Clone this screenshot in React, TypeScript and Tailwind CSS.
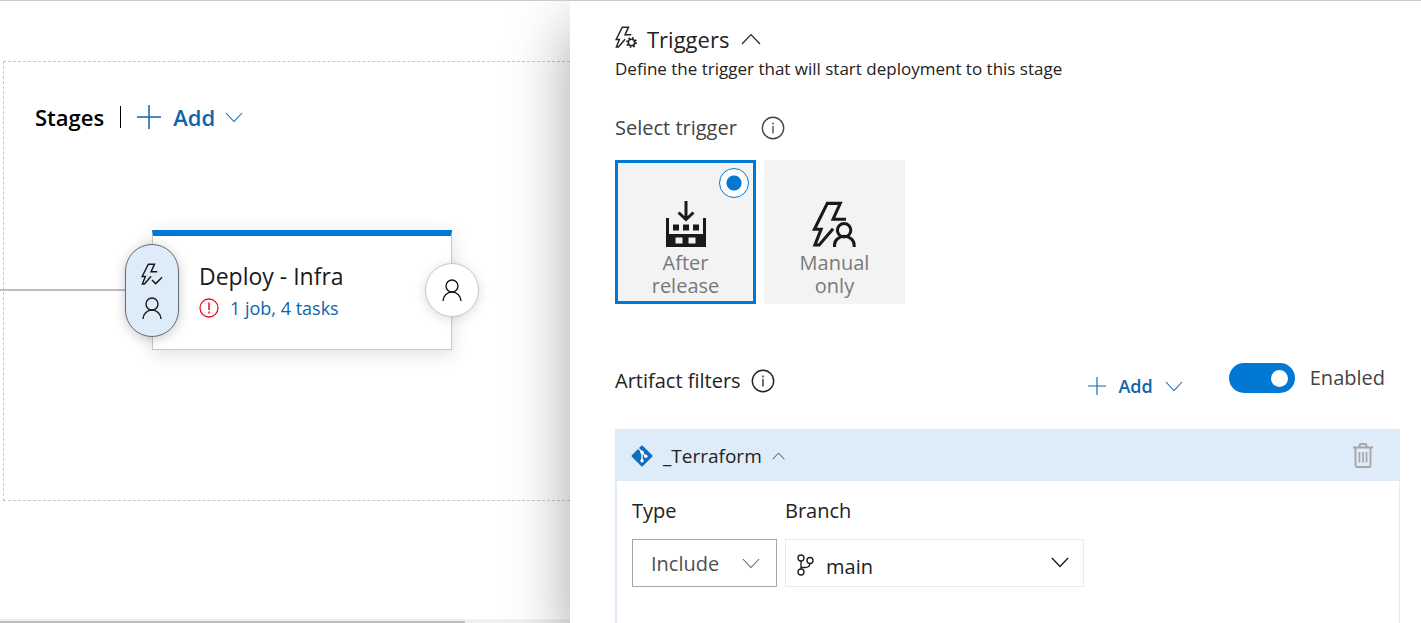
import { useState } from "react";
import type { ReactNode } from "react";

type IconProps = { className?: string };

function Chevron({ className = "", up = false, weight = 1.2 }: IconProps & { up?: boolean; weight?: number }) {
  return (
    <svg viewBox="0 0 20 12" className={className} fill="none" stroke="currentColor" strokeWidth={weight} aria-hidden="true">
      <path d={up ? "M1 11 10 1.500 19 11" : "M1 1 10 10.500 19 1"} />
    </svg>
  );
}

function Plus({ className = "" }: IconProps) {
  return (
    <svg viewBox="0 0 24 24" className={className} fill="none" stroke="currentColor" strokeWidth="1.500" aria-hidden="true">
      <path d="M12 0v24M0 12h24" />
    </svg>
  );
}

function Person({ className = "" }: IconProps) {
  return (
    <svg viewBox="0 0 20 22" className={className} fill="none" stroke="currentColor" strokeWidth="1.400" aria-hidden="true">
      <circle cx="10" cy="7" r="6" />
      <path d="M1 22a9 9 0 0 1 18 0" />
    </svg>
  );
}

function Bolt({ className = "", weight, children }: IconProps & { weight: number; children: ReactNode }) {
  return (
    <svg viewBox="0 0 48 48" className={className} fill="none" stroke="currentColor" strokeWidth={weight} aria-hidden="true">
      <path d="M35.500 19H22L29.500 2.500H16L2.500 29.500H9.500L3 46H7.500L22 29" />
      {children}
    </svg>
  );
}

function BoltPerson({ className = "" }: IconProps) {
  return (
    <Bolt className={className} weight={3.2}>
      <circle cx="33.500" cy="30.500" r="7" />
      <path d="M23.500 48v-2a10 9 0 0 1 20.500 0v2" />
    </Bolt>
  );
}

function BoltCheck({ className = "" }: IconProps) {
  return (
    <Bolt className={className} weight={3.2}>
      <path d="M24 37l8 8 14-14" />
    </Bolt>
  );
}

function BoltGear({ className = "" }: IconProps) {
  return (
    <Bolt className={className} weight={3.2}>
      <circle cx="36" cy="36" r="7" strokeWidth="3.500" />
      <circle cx="36" cy="36" r="10" strokeWidth="4" strokeDasharray="3.500 4.354" />
    </Bolt>
  );
}

function Info({ className = "" }: IconProps) {
  return (
    <svg viewBox="0 0 24 24" className={className} fill="none" stroke="currentColor" aria-hidden="true">
      <circle cx="12" cy="12" r="10.700" strokeWidth="1.400" />
      <path d="M12 10v7.500M12 6.500v2" strokeWidth="1.300" />
    </svg>
  );
}

function Alert({ className = "" }: IconProps) {
  return (
    <svg viewBox="0 0 20 20" className={className} fill="none" stroke="currentColor" aria-hidden="true">
      <circle cx="10" cy="10" r="9" strokeWidth="1.300" />
      <path d="M10 4.500v7.500M10 13.500v2" strokeWidth="1.500" />
    </svg>
  );
}

function Release({ className = "" }: IconProps) {
  return (
    <svg viewBox="0 0 40 46" className={className} fill="currentColor" aria-hidden="true">
      <path d="M0 17h3v16h34V17h3v29H0zM9.500 36.500v6h7v-6zM22.500 36.500v6h7v-6z" fillRule="evenodd" />
      <path d="M7 23.500h6v6H7zM17 23.500h6v6h-6zM27 23.500h6v6h-6z" />
      <path d="M20 0v18M12.500 11.500l7.500 7 7.500-7" fill="none" stroke="currentColor" strokeWidth="3" />
    </svg>
  );
}

function Git({ className = "" }: IconProps) {
  return (
    <svg viewBox="0 0 22 22" className={className} aria-hidden="true">
      <rect x="3.300" y="3.300" width="15.400" height="15.400" rx="1" transform="rotate(45 11 11)" fill="#106ebe" />
      <g stroke="#fff" strokeWidth="1.400" fill="none">
        <path d="M7.500 3.500l3.500 3.500v9M11 7.500l4 4" />
      </g>
      <g fill="#fff">
        <circle cx="11" cy="7.200" r="1.700" />
        <circle cx="11" cy="15.700" r="1.700" />
        <circle cx="14.800" cy="11.300" r="1.700" />
      </g>
    </svg>
  );
}

function Trash({ className = "" }: IconProps) {
  return (
    <svg viewBox="0 0 20 25" className={className} fill="none" stroke="currentColor" aria-hidden="true">
      <path d="M0 4.500h20M6.500 4V2.500q0-1.500 1.500-1.500h4q1.500 0 1.500 1.500V4M2.500 5v17.500q0 1.500 1.500 1.500h12q1.500 0 1.500-1.500V5" strokeWidth="1.900" />
      <path d="M6.500 9v10.500M10 9v10.500M13.500 9v10.500" strokeWidth="1.700" />
    </svg>
  );
}

function Branch({ className = "" }: IconProps) {
  return (
    <svg viewBox="0 0 17 22" className={className} fill="none" stroke="currentColor" strokeWidth="1.400" aria-hidden="true">
      <circle cx="4" cy="4" r="3" />
      <circle cx="4" cy="18" r="3" />
      <circle cx="13" cy="6.500" r="3" />
      <path d="M4 7v8M4 13.500h4.500q4 0 4.500-4" />
    </svg>
  );
}

function Stage() {
  return (
    <div className="mt-[99px] -ml-[35px] flex items-center">
      <div className="h-[2px] w-[125px] bg-[#bdbdbd]" />
      <button
        type="button"
        aria-label="Pre-deployment conditions"
        className="z-10 flex h-[93px] w-[54px] flex-col items-center justify-center gap-3 rounded-full border border-[#666b70] bg-[#deecf9] pt-[2px] text-[#1a1a1a] shadow-[0_2px_12px_rgba(0,0,0,0.22)]"
      >
        <BoltCheck className="size-[22px]" />
        <Person className="h-[22px] w-5" />
      </button>
      <article className="-ml-[27px] h-[120px] w-[300px] border border-t-[6px] border-[#c8c8c8] border-t-[#0078d4] bg-white pt-[26px] pl-[46px] shadow-[0_4px_18px_rgba(0,0,0,0.13)]">
        <h3 className="text-[23px] leading-[28px] text-[#1a1a1a]">Deploy - Infra</h3>
        <a href="#tasks" className="mt-1 flex items-center gap-[11px] text-[18px] leading-[28px] text-[#1065ab]">
          <Alert className="size-5 text-[#e81123]" />
          1 job, 4 tasks
        </a>
      </article>
      <button
        type="button"
        aria-label="Post-deployment conditions"
        className="-ml-[27px] flex size-[54px] items-center justify-center rounded-full border border-[#c8c8c8] bg-white text-[#1a1a1a] shadow-[0_2px_12px_rgba(0,0,0,0.14)]"
      >
        <Person className="h-[22px] w-5" />
      </button>
    </div>
  );
}

function TriggerOption({ value, current, onPick, label, icon }: {
  value: string;
  current: string;
  onPick: (v: string) => void;
  label: string;
  icon: ReactNode;
}) {
  return (
    <label className="relative flex h-36 w-[141px] flex-col items-center border-[3px] border-[#f3f3f3] bg-[#f3f3f3] pt-[38px] text-[#1a1a1a] has-checked:border-[#0078d4]">
      <input
        type="radio"
        name="trigger"
        value={value}
        checked={current === value}
        onChange={() => onPick(value)}
        className="absolute top-[5px] right-1 size-[30px] appearance-none rounded-full border border-[#0078d4] bg-white opacity-0 checked:bg-[radial-gradient(circle,#0078d4_7px,#ffffff_8px)] checked:opacity-100"
      />
      {icon}
      <span className="mt-1 w-[80px] text-center text-[20px] leading-[23px] text-[#797979]">{label}</span>
    </label>
  );
}

export default function App() {
  const [trigger, setTrigger] = useState("release");
  const [enabled, setEnabled] = useState(true);

  return (
    <div className="flex h-screen overflow-hidden border-t border-[#cccccc] bg-white font-['Open_Sans','Noto_Sans',sans-serif] text-[#222222]">
      <main className="flex w-[570px] shrink-0 flex-col justify-between overflow-hidden pt-[60px]">
        <section className="ml-[3px] h-[440px] border border-r-0 border-dashed border-[#c8c8c8] pt-[41px] pl-[31px]">
          <header className="flex items-center text-[22px] leading-[28px]">
            <h2 className="font-semibold text-black">Stages</h2>
            <span className="mx-4 h-[22px] w-px bg-black" />
            <button type="button" className="flex items-center font-semibold text-[#1065ab]">
              <Plus className="mr-3 size-6" />
              Add
              <Chevron className="ml-[10px] h-[11px] w-[18px]" />
            </button>
          </header>
          <Stage />
        </section>
        <div className="h-1 bg-[#f0f0f0] pt-[2px]">
          <div className="h-[2px] w-[465px] bg-[#bdbdbd]" />
        </div>
      </main>

      <aside className="z-10 flex min-w-0 flex-1 flex-col bg-white pt-[23px] pr-[21px] pl-[45px] shadow-[0_26px_58px_rgba(0,0,0,0.36)]">
        <button type="button" className="flex items-center self-start text-[22px] leading-[30px]">
          <BoltGear className="mr-[10px] mb-1 size-[22px]" />
          Triggers
          <Chevron up className="ml-3 h-3 w-5" />
        </button>
        <p className="text-[17px] leading-[30px]">Define the trigger that will start deployment to this stage</p>

        <div className="mt-[29px] flex items-center gap-6 text-[20px] leading-[30px] text-[#444444]">
          <span id="trigger-label">Select trigger</span>
          <Info className="size-6" />
        </div>
        <div role="radiogroup" aria-labelledby="trigger-label" className="mt-[17px] flex gap-2">
          <TriggerOption value="release" current={trigger} onPick={setTrigger} label="After release" icon={<Release className="h-[46px] w-10" />} />
          <TriggerOption value="manual" current={trigger} onPick={setTrigger} label="Manual only" icon={<BoltPerson className="h-[46px] w-12" />} />
        </div>

        <div className="mt-[59px] flex items-start">
          <div className="flex items-center gap-[10px] pt-[3px] text-[20px] leading-[30px]">
            <h3>Artifact filters</h3>
            <Info className="size-6" />
          </div>
          <button type="button" className="mt-2 ml-auto flex items-center text-[18px] leading-[30px] font-semibold text-[#1065ab]">
            <Plus className="mr-3 size-[18px]" />
            Add
            <Chevron className="ml-3 h-[11px] w-[18px]" />
          </button>
          <label className="ml-[46px] flex items-center gap-[15px] pr-[15px] text-[20px] leading-[30px] text-[#444444]">
            <input
              type="checkbox"
              role="switch"
              checked={enabled}
              onChange={(e) => setEnabled(e.target.checked)}
              className="flex h-[30px] w-[66px] appearance-none items-center rounded-full bg-[#8a8a8a] px-[7px] before:size-[17px] before:rounded-full before:bg-white checked:justify-end checked:bg-[#0078d4]"
            />
            Enabled
          </label>
        </div>

        <section className="mt-7 flex-1 border-r border-l-2 border-r-[#eaeaea] border-l-[#deecf9]">
          <header className="flex h-[52px] items-center border-t border-[#eaeaea] bg-[#deecf9] pr-[26px] pl-[14px]">
            <button type="button" className="flex items-center text-[19px] leading-[30px]">
              <Git className="mr-[10px] size-[22px]" />
              _Terraform
              <Chevron up className="ml-[10px] h-2 w-[13px]" />
            </button>
            <button type="button" aria-label="Delete filter" className="ml-auto text-[#a6a6a6]">
              <Trash className="h-[25px] w-5" />
            </button>
          </header>
          <div className="flex gap-2 pt-[15px] pl-[15px] text-[20px] leading-[30px]">
            <div className="flex w-[145px] flex-col gap-[13px]">
              <label htmlFor="type">Type</label>
              <div className="relative">
                <select id="type" className="h-12 w-full appearance-none border border-[#a6a6a6] bg-white pt-[2px] pl-[18px] text-[#505050]">
                  <option>Include</option>
                  <option>Exclude</option>
                </select>
                <Chevron className="pointer-events-none absolute top-[19px] right-[17px] h-[11px] w-[18px] text-[#666666]" />
              </div>
            </div>
            <div className="flex w-[299px] flex-col gap-[13px]">
              <label htmlFor="branch">Branch</label>
              <div className="relative">
                <select id="branch" className="h-12 w-full appearance-none border border-[#eaeaea] bg-white pt-[7px] pl-[40px]">
                  <option>main</option>
                </select>
                <Branch className="pointer-events-none absolute top-[15px] left-[12px] h-[22px] w-[17px]" />
                <Chevron weight={1.6} className="pointer-events-none absolute top-[18px] right-[15px] h-[11px] w-[18px]" />
              </div>
            </div>
          </div>
        </section>
      </aside>
    </div>
  );
}
